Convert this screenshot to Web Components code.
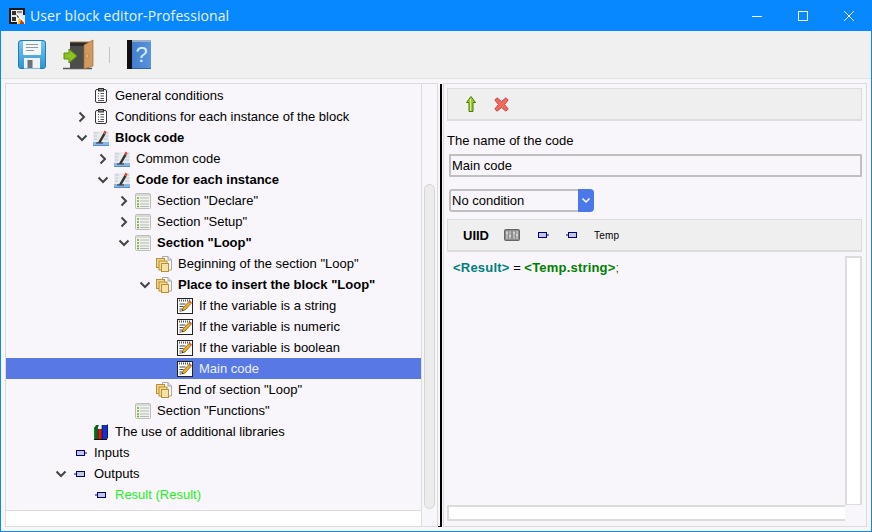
<!DOCTYPE html>
<html>
<head>
<meta charset="utf-8">
<title>User block editor-Professional</title>
<style>
html, body { margin: 0; padding: 0; background: #f8f6fa; }
body { font: 13px "Liberation Sans", Arial, sans-serif; color: #000; }
</style>
</head>
<body>
<app-window>
  <title-bar slot="title" caption="User block editor-Professional"></title-bar>
  <main-toolbar slot="toolbar"></main-toolbar>
  <tree-view slot="left">
    <tree-node level="1" icon="clip" label="General conditions"></tree-node>
    <tree-node level="1" icon="clip" toggle="right" label="Conditions for each instance of the block"></tree-node>
    <tree-node level="1" icon="code" toggle="down" bold label="Block code">
      <tree-node level="2" icon="code" toggle="right" label="Common code"></tree-node>
      <tree-node level="2" icon="code" toggle="down" bold label="Code for each instance">
        <tree-node level="3" icon="list" toggle="right" label='Section "Declare"'></tree-node>
        <tree-node level="3" icon="list" toggle="right" label='Section "Setup"'></tree-node>
        <tree-node level="3" icon="list" toggle="down" bold label='Section "Loop"'>
          <tree-node level="4" icon="pages" label='Beginning of the section "Loop"'></tree-node>
          <tree-node level="4" icon="pages" toggle="down" bold label='Place to insert the block "Loop"'>
            <tree-node level="5" icon="note" label="If the variable is a string"></tree-node>
            <tree-node level="5" icon="note" label="If the variable is numeric"></tree-node>
            <tree-node level="5" icon="note" label="If the variable is boolean"></tree-node>
            <tree-node level="5" icon="note" selected label="Main code"></tree-node>
          </tree-node>
          <tree-node level="4" icon="pages" label='End of section "Loop"'></tree-node>
        </tree-node>
        <tree-node level="3" icon="list" label='Section "Functions"'></tree-node>
      </tree-node>
    </tree-node>
    <tree-node level="1" icon="books" label="The use of additional libraries"></tree-node>
    <tree-node level="0" icon="pin-in" label="Inputs"></tree-node>
    <tree-node level="0" icon="pin-out" toggle="down" label="Outputs">
      <tree-node level="1" icon="pin-out" color="#22ee22" label="Result (Result)"></tree-node>
    </tree-node>
  </tree-view>
  <code-editor slot="right"></code-editor>
</app-window>

<script>
// icons are all drawn by hand, sizes match the box given in viewBox
const ICONS = {
  app: `<svg width="16" height="16" viewBox="0 0 16 16"><rect width="16" height="16" fill="#e8e8e8"/><path d="M0 0h16v2H0zM0 0h2v16H0zM0 14h8v2H0zM14 0h2v7h-2z" fill="#1a1a1a"/><path d="M3 3h4v4H3zM3 9h4v4H3z" fill="#333"/><path d="M8 3h5v2H8z" fill="#8a8a8a"/><path d="M7 6l3 1 5 5v4H9l-2-6z" fill="#fff"/><path d="M7 6l3 3-1 1z" fill="#111"/><path d="M10 10l5 4v2H9z" fill="#e8b818"/><path d="M12 12l3 3v1h-4z" fill="#d42818"/></svg>`,
  save: `<svg width="30" height="30" viewBox="0 0 30 30"><defs><linearGradient id="fl" x1="0" y1="0" x2="0" y2="1"><stop offset="0" stop-color="#7cc6ee"/><stop offset="1" stop-color="#2f94d4"/></linearGradient></defs><rect x="1.500" y=".5" width="27" height="28" rx="2.500" fill="url(#fl)" stroke="#1f7cb8"/><path d="M6 1h18v13a1 1 0 0 1-1 1H7a1 1 0 0 1-1-1z" fill="#f4f7f9"/><path d="M9 4.500h12M9 7.500h12M9 10.500h8" stroke="#8e9aa4"/><path d="M7 28.500V18h16v10.500z" fill="#eef2f5"/><rect x="10.500" y="20" width="5" height="8" fill="#66727e"/></svg>`,
  exit: `<svg width="32" height="32" viewBox="0 0 32 32"><path d="M0 29.500h29" stroke="#555" stroke-width="1.500"/><rect x="7" y="3" width="18" height="26" fill="#4c4c4c"/><path d="M7 3h18v4H7z" fill="#2c2c2c"/><path d="M7 3h20" stroke="#a87a4a"/><path d="M21 6l9-5v26l-9 3z" fill="#d29a62" stroke="#a06c3a" stroke-width=".7"/><rect x="23" y="15" width="2" height="4" fill="#f0d070" stroke="#a06c3a" stroke-width=".5"/><path d="M1 14h5v-4l8 7-8 7v-4H1z" fill="#8cc21e" stroke="#5c8a10"/></svg>`,
  book: `<svg width="24" height="31" viewBox="0 0 24 31"><defs><linearGradient id="bk" x1="0" y1="0" x2="1" y2="0"><stop offset="0" stop-color="#3f78c8"/><stop offset="1" stop-color="#5a94dc"/></linearGradient></defs><rect x="0" y="1" width="24" height="29" rx="1" fill="url(#bk)"/><rect x="0" y="1" width="5" height="29" fill="#111"/><path d="M5 1h19v2H5z" fill="#9ab0c8"/><path d="M5 29h19v1H5z" fill="#2f62a8"/><text x="14.500" y="23" font-family="Liberation Sans" font-size="22" fill="#d8ecff" text-anchor="middle">?</text></svg>`,
  clip: `<svg width="12" height="15" viewBox="0 0 12 15"><rect x=".5" y="1.500" width="11" height="13" rx="1.500" fill="#fafafa" stroke="#333"/><rect x="3.500" y=".5" width="5" height="2.500" fill="#888" stroke="#333"/><path d="M3 5.500h1M3 8h1M3 10.500h1M5.500 5.500H9M5.500 8H9M5.500 10.500H9M3 12.500h6" stroke="#555"/></svg>`,
  code: `<svg width="16" height="16" viewBox="0 0 16 16"><rect y="1" width="16" height="15" fill="#e8ebee"/><path d="M1 3h4M1 6h3M1 9h3M10 3h5M11 6h4M11 9h4" stroke="#c0c6ce"/><rect y="12" width="16" height="4" fill="#8ab4e4"/><path d="M0 15.500h16" stroke="#5a8cc8"/><path d="M5 12.500L10.500 3l2 1.200L7.500 13z" fill="#333"/><path d="M10.500 3l1-2.500 2 1.500-1 2.200z" fill="#d84030"/><path d="M3 13h7" stroke="#333"/></svg>`,
  list: `<svg width="16" height="16" viewBox="0 0 16 16"><rect x=".5" y=".5" width="15" height="15" rx="1" fill="#f1f3ef" stroke="#bcbcb8"/><rect x="1" y="1" width="14" height="2" fill="#d8d8d4"/><path d="M5 5h9M5 8h9M5 11h9M5 13.500h9" stroke="#b4b8b4"/><path d="M2 5h2M2 8h2M2 11h2M2 13.500h2" stroke="#70a828" stroke-width="1.500"/></svg>`,
  pages: `<svg width="16" height="16" viewBox="0 0 16 16"><path d="M6.500.5H12l3.500 3.500v10h-9z" fill="#f6f6f6" stroke="#a8a8a8"/><path d="M12 .5v3.500h3.500" fill="#ddd" stroke="#a8a8a8"/><rect x=".5" y="2.500" width="8" height="9" fill="#f0d690" stroke="#b89030"/><rect x="3" y="5" width="8" height="9" fill="#f4dc98" stroke="#b89030"/><rect x="5.500" y="7.500" width="7" height="8" fill="#f6e2a8" stroke="#b89030"/></svg>`,
  note: `<svg width="16" height="16" viewBox="0 0 16 16"><rect x=".5" y=".5" width="15" height="15" fill="#fff" stroke="#222"/><path d="M2 2.500h12" stroke="#555" stroke-dasharray="1 1" stroke-width="2"/><path d="M2.500 6h6M2.500 8.500h4M2.500 11h3M2.500 13h2" stroke="#444"/><path d="M5 13l1-3 6-6.500 2 2L8 12z" fill="#f0b020" stroke="#6a4a10" stroke-width=".7"/><path d="M12 3.500l1-1 2 2-1 1z" fill="#d85040"/><path d="M5 13l.5-1.500 1 1z" fill="#222"/></svg>`,
  books: `<svg width="14" height="16" viewBox="0 0 14 16"><path d="M0 3h4v13H0z" fill="#128a2a"/><path d="M1 3l1-2h3L4 3z" fill="#0c5c1c"/><path d="M4 5h4v11H4z" fill="#d81818"/><path d="M8 1h5v14H8z" fill="#1432c8"/><path d="M13 1v14l1-1V0z" fill="#0a1a70"/><path d="M0 15.500h13" stroke="#111"/><path d="M2 3v13M4 5v11M8 1v15" stroke="#000" stroke-opacity=".6"/></svg>`,
  "pin-in": `<svg width="18" height="6" viewBox="0 0 18 6"><rect x="5.500" y=".5" width="8" height="5" fill="#c4c8d4" stroke="#000080"/><path d="M14 3h2" stroke="#000080"/></svg>`,
  "pin-out": `<svg width="18" height="6" viewBox="0 0 18 6"><rect x="5.500" y=".5" width="8" height="5" fill="#c4c8d4" stroke="#000080"/><path d="M3 3h2" stroke="#000080"/></svg>`,
  up: `<svg width="10" height="16" viewBox="0 0 10 16"><path d="M5 .5L9.500 6.500H7V15.500H3V6.500H.5z" fill="#9ccc2a" stroke="#4a7a0a"/><path d="M4.500 3v12" stroke="#d8f080"/></svg>`,
  del: `<svg width="15" height="15" viewBox="0 0 15 15"><path d="M3 .8L7.500 4.500 12 .8 14.200 3 10.500 7.500 14.200 12 12 14.200 7.500 10.500 3 14.200.8 12 4.500 7.500.8 3z" fill="#f26a5e" stroke="#c8483c"/></svg>`,
  mixer: `<svg width="16" height="12" viewBox="0 0 16 12"><rect x=".5" y=".5" width="15" height="11" rx="1" fill="#8c8c8c" stroke="#666"/><path d="M3 2v8M6 2v8M10 2v8M13 2v8" stroke="#dcdcdc"/><path d="M2 4h2M5 7h2M9 4h2M12 6h2" stroke="#eee"/></svg>`,
};

class UiIcon extends HTMLElement {
  connectedCallback() {
    const root = this.shadowRoot || this.attachShadow({ mode: "open" });
    root.innerHTML = `<style>:host{display:inline-flex;align-items:center;justify-content:center;line-height:0}</style>${ICONS[this.getAttribute("name")] || ""}`;
  }
}
customElements.define("ui-icon", UiIcon);

class AppWindow extends HTMLElement {
  constructor() {
    super();
    this.attachShadow({ mode: "open" });
    this.shadowRoot.innerHTML = `
      <style>
        :host { display: flex; flex-direction: column; width: 872px; height: 532px; box-sizing: border-box;
                border: 1px solid #0a88f4; border-top: none; background: #f8f6fa; overflow: hidden; }
        .main { flex: 1; min-height: 0; display: flex; padding: 4px; }
        .split { width: 5px; flex: none; display: flex; justify-content: center; padding-left: 1px; box-sizing: border-box; }
        .split i { display: block; position: relative; width: 2px; margin-top: 1px; background: #000; }
        .split i::after { content: ""; position: absolute; left: -2px; bottom: 0; width: 2px; height: 1px; background: #000; }
        ::slotted([slot=left]) { width: 433px; flex: none; }
        ::slotted([slot=right]) { flex: 1; min-width: 0; }
      </style>
      <slot name="title"></slot>
      <slot name="toolbar"></slot>
      <div class="main">
        <slot name="left"></slot>
        <div class="split"><i></i></div>
        <slot name="right"></slot>
      </div>`;
  }
}
customElements.define("app-window", AppWindow);

class TitleBar extends HTMLElement {
  constructor() {
    super();
    this.attachShadow({ mode: "open" });
    this.shadowRoot.innerHTML = `
      <style>
        :host { display: flex; align-items: center; height: 31px; flex: none; background: #0888ff; color: #fff;
                margin: 0 -1px; font: 14px "Open Sans", sans-serif; letter-spacing: .1px; }
        ui-icon { margin: 0 5px 0 9px; }
        .cap { flex: 1; color: #e8f4ff; }
        .btn { width: 46px; display: flex; justify-content: center; }
      </style>
      <ui-icon name="app"></ui-icon>
      <span class="cap">${this.getAttribute("caption")}</span>
      <span class="btn"><svg width="10" height="10"><path d="M0 5.500h10" stroke="#fff"/></svg></span>
      <span class="btn"><svg width="10" height="10"><rect x=".5" y=".5" width="9" height="9" fill="none" stroke="#fff"/></svg></span>
      <span class="btn"><svg width="10" height="10"><path d="M0 0l10 10M10 0L0 10" stroke="#fff"/></svg></span>`;
  }
}
customElements.define("title-bar", TitleBar);

class MainToolbar extends HTMLElement {
  constructor() {
    super();
    this.attachShadow({ mode: "open" });
    this.shadowRoot.innerHTML = `
      <style>
        :host { display: flex; align-items: center; height: 47px; flex: none; background: #f0f0f0; padding-left: 16px;
                box-sizing: content-box; border-bottom: 1px solid #e2e2e2; }
        .sep { width: 1px; height: 16px; background: #c4c4c4; margin: 0 17px 0 14px; }
      </style>
      <ui-icon name="save"></ui-icon>
      <ui-icon name="exit" style="margin-left:16px"></ui-icon>
      <span class="sep"></span>
      <ui-icon name="book"></ui-icon>`;
  }
}
customElements.define("main-toolbar", MainToolbar);

class TreeView extends HTMLElement {
  constructor() {
    super();
    this.attachShadow({ mode: "open" });
    this.shadowRoot.innerHTML = `
      <style>
        :host { display: grid; grid-template-columns: 1fr 15px; grid-template-rows: 1fr 16px; box-sizing: border-box;
                border: 1px solid #dcdcdc; }
        .rows { padding-top: 1px; min-height: 0; overflow: hidden; border-right: 1px solid #dcdcdc; }
        .v { padding: 100px 2px 1px 2px; display: flex; }
        .v i { flex: 1; border: 1px solid #d4d4d4; border-radius: 6px; background: #ececec; }
        .h { background: #fff; border-top: 1px solid #dcdcdc; border-right: 1px solid #dcdcdc; }
      </style>
      <div class="rows"><slot></slot></div>
      <div class="v"><i></i></div>
      <div class="h"></div>`;
  }
}
customElements.define("tree-view", TreeView);

class TreeNode extends HTMLElement {
  constructor() {
    super();
    this.attachShadow({ mode: "open" });
    const level = +this.getAttribute("level");
    const toggle = this.getAttribute("toggle");
    const chevron = toggle === "right"
      ? `<svg width="8" height="12" viewBox="0 0 8 12"><path d="M1.500 1.500L6 6l-4.500 4.500" fill="none" stroke="#444" stroke-width="2"/></svg>`
      : toggle === "down"
      ? `<svg width="12" height="8" viewBox="0 0 12 8"><path d="M1.500 1.500L6 6l4.500-4.500" fill="none" stroke="#444" stroke-width="2"/></svg>`
      : "";
    const selected = this.hasAttribute("selected");
    const color = this.getAttribute("color") || (selected ? "#e8f0ff" : "#000");
    this.shadowRoot.innerHTML = `
      <style>
        :host { display: block; }
        .row { display: flex; align-items: center; height: 21px; box-sizing: border-box; white-space: nowrap;
               padding-left: ${47 + 21 * level}px; color: ${color};
               font-weight: ${this.hasAttribute("bold") ? "bold" : "normal"};
               background: ${selected ? "#5878e4" : "none"}; }
        .tog { width: 16px; height: 16px; display: flex; align-items: center; justify-content: center; flex: none; }
        .ico { width: 18px; margin: 0 5px 0 2px; flex: none; }
      </style>
      <div class="row">
        <span class="tog">${chevron}</span>
        <ui-icon class="ico" name="${this.getAttribute("icon")}"></ui-icon>
        <span>${this.getAttribute("label").replace(/"/g, "&quot;")}</span>
      </div>
      <slot></slot>`;
  }
}
customElements.define("tree-node", TreeNode);

class CodeEditor extends HTMLElement {
  constructor() {
    super();
    this.attachShadow({ mode: "open" });
    this.shadowRoot.innerHTML = `
      <style>
        :host { display: flex; flex-direction: column; box-sizing: border-box; border: 1px solid #dcdcdc;
                padding: 4px 4px 5px 3px; min-height: 0; }
        .bar { display: flex; align-items: center; flex: none; box-sizing: border-box; background: #efefef;
               border: 1px solid #dcdcdc; border-bottom-width: 2px; }
        .top { height: 33px; padding-left: 18px; }
        .lbl { margin: 12px 0 6px; line-height: 15px; }
        .inp { margin-left: 2px; height: 23px; box-sizing: border-box; border: 2px solid #c0c0c0; padding: 0 1px;
               display: flex; align-items: center; flex: none; border-radius: 1px; }
        .sel { margin: 12px 0 7px 2px; display: flex; height: 23px; width: 145px; flex: none; }
        .sel .val { flex: 1; box-sizing: border-box; border: 2px solid #c0c0c0; border-right: none; border-radius: 3px 0 0 3px;
                    padding: 0 1px; display: flex; align-items: center; }
        .sel .arr { width: 16px; background: #4a78e8; border-radius: 0 4px 4px 0; display: flex; align-items: center; justify-content: center; }
        .tools { height: 33px; padding-left: 15px; }
        .uiid { font-weight: bold; }
        .temp { font-size: 10px; letter-spacing: .2px; }
        .edit { flex: 1; min-height: 0; margin-top: 4px; display: grid; grid-template-columns: 1fr 17px; grid-template-rows: 1fr 16px; }
        .code { padding: 3px 6px; line-height: 17px; }
        .code b { letter-spacing: .2px; }
        .code b.a { color: #008080; }
        .code b.b { color: #008000; }
        .code .c { color: #606000; }
        .vs { background: #fff; border: 2px solid #dcdcdc; border-bottom-width: 1px; box-sizing: border-box; }
        .hs { background: #fff; border: 2px solid #dcdcdc; border-right: none; box-sizing: border-box; }
      </style>
      <div class="bar top"><ui-icon name="up"></ui-icon><ui-icon name="del" style="margin-left:18px"></ui-icon></div>
      <div class="lbl">The name of the code</div>
      <div class="inp">Main code</div>
      <div class="sel">
        <div class="val">No condition</div>
        <div class="arr"><svg width="10" height="7" viewBox="0 0 10 7"><path d="M1.500 1.500L5 5l3.500-3.500" fill="none" stroke="#fff" stroke-width="1.500"/></svg></div>
      </div>
      <div class="bar tools">
        <span class="uiid">UIID</span>
        <ui-icon name="mixer" style="margin-left:15px"></ui-icon>
        <ui-icon name="pin-in" style="margin-left:13px"></ui-icon>
        <ui-icon name="pin-out" style="margin-left:12px"></ui-icon>
        <span class="temp" style="margin-left:13px">Temp</span>
      </div>
      <div class="edit">
        <div class="code"><b class="a">&lt;Result&gt;</b> = <b class="b">&lt;Temp.string&gt;</b><span class="c">;</span></div>
        <div class="vs"></div>
        <div class="hs"></div>
      </div>`;
  }
}
customElements.define("code-editor", CodeEditor);
</script>
</body>
</html>
